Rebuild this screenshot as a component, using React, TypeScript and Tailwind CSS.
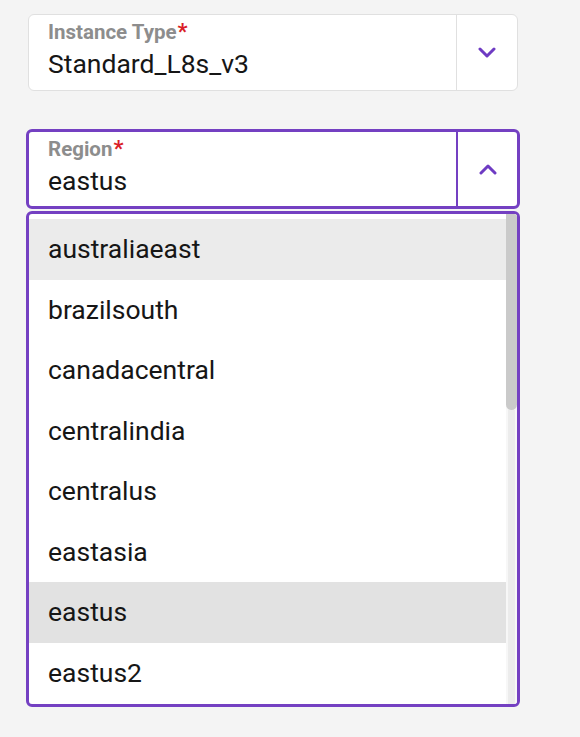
import React from 'react'

const REGIONS = [
  'australiaeast',
  'brazilsouth',
  'canadacentral',
  'centralindia',
  'centralus',
  'eastasia',
  'eastus',
  'eastus2',
]

const FONT = 'Roboto, "Liberation Sans", sans-serif'

function Chevron({ up }: { up?: boolean }) {
  return (
    <svg width="20" height="12" viewBox="0 0 20 12" fill="none">
      <path
        d={up ? 'M3 10 L10 3 L17 10' : 'M3 2 L10 9 L17 2'}
        stroke="#6e3bc3"
        strokeWidth="3"
        strokeLinecap="round"
        strokeLinejoin="round"
      />
    </svg>
  )
}

function Label({ text }: { text: string }) {
  return (
    <p className="text-[20.5px] font-bold leading-none text-[#8d8d8d]">
      {text}
      <span className="ml-[1px] text-[22px] text-[#da1e28]">*</span>
    </p>
  )
}

export default function App() {
  return (
    <div className="min-h-[737px] w-[580px] bg-[#f4f4f4] pt-[14px]" style={{ fontFamily: FONT }}>
      {/* ── Instance type (closed) ─────────────────────────── */}
      <div className="ml-[28px] flex h-[77px] w-[490px] rounded-md border border-[#e0e0e0] bg-white">
        <div className="flex flex-1 flex-col justify-center gap-[8px] pl-[19px] pb-[6px]">
          <Label text="Instance Type" />
          <p className="text-[26.5px] leading-none text-[#161616]">Standard_L8s_v3</p>
        </div>
        <div className="flex w-[61px] items-center justify-center border-l border-[#e0e0e0]">
          <Chevron />
        </div>
      </div>

      {/* ── Region (open) ──────────────────────────────────── */}
      <div className="ml-[26px] mt-[38px] flex h-[80px] w-[494px] rounded-md border-[3px] border-[#7440c2] bg-white">
        <div className="flex flex-1 flex-col justify-center gap-[8px] pl-[19px] pb-[6px]">
          <Label text="Region" />
          <p className="text-[26.5px] leading-none text-[#161616]">eastus</p>
        </div>
        <div className="flex w-[61px] items-center justify-center border-l-2 border-[#7440c2]">
          <Chevron up />
        </div>
      </div>

      <div className="ml-[26px] mt-[2px] flex h-[496px] w-[494px] overflow-hidden rounded-md border-[3px] border-[#7440c2] bg-white">
        <div className="flex-1 pt-[5px]">
          {REGIONS.map((r) => (
            <div
              key={r}
              className={
                'flex h-[60.5px] items-center pl-[19px] text-[26.5px] text-[#161616] ' +
                (r === 'australiaeast' ? 'bg-[#ebebeb]' : r === 'eastus' ? 'bg-[#e2e2e2]' : '')
              }
            >
              {r}
            </div>
          ))}
        </div>
        {/* scrollbar */}
        <div className="flex w-[11px] justify-center bg-[#f7f7f7]">
          <div className="flex w-full flex-col">
            <div className="h-[196px] rounded-b-md bg-[#cacaca]" />
            <div className="mx-auto w-[7px] flex-1 bg-[#ececec]" />
          </div>
        </div>
      </div>
    </div>
  )
}
